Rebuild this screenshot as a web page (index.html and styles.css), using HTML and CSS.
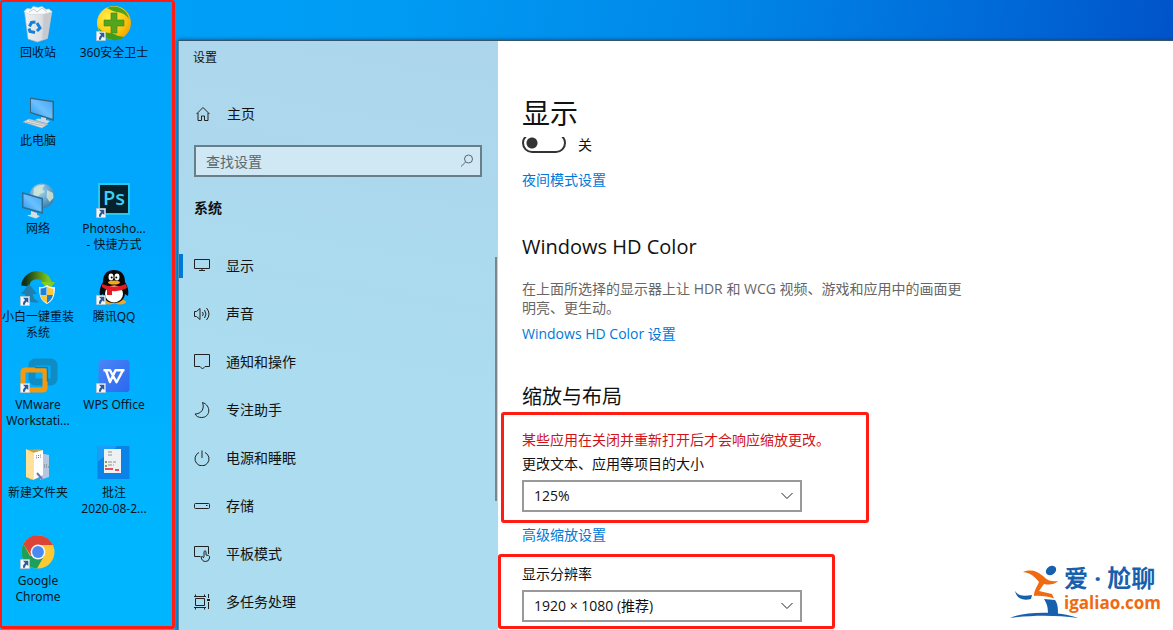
FILE: index.html
```html
<!DOCTYPE html>
<html lang="zh-CN">
<head>
<meta charset="utf-8">
<meta name="viewport" content="width=device-width, initial-scale=1">
<title>设置</title>
<link rel="stylesheet" href="styles.css">
</head>
<body>
<svg class="defs" aria-hidden="true">
  <defs>
    <linearGradient id="screen" x1="0" y1="1" x2="1" y2="0"><stop offset="0" stop-color="#2a95ec"/><stop offset=".5" stop-color="#6cc0ff"/><stop offset="1" stop-color="#42a5f2"/></linearGradient>
    <linearGradient id="bin" x1="0" x2="1"><stop offset="0" stop-color="#f1f3f5"/><stop offset=".6" stop-color="#dcdfe3"/><stop offset="1" stop-color="#a9adb3"/></linearGradient>
    <radialGradient id="ball" cx=".35" cy=".35" r=".75"><stop offset="0" stop-color="#fff04a"/><stop offset=".6" stop-color="#fdc913"/><stop offset="1" stop-color="#f0a000"/></radialGradient>
    <radialGradient id="globe" cx=".4" cy=".3" r=".8"><stop offset="0" stop-color="#a9d8f3"/><stop offset="1" stop-color="#2b76a8"/></radialGradient>
    <linearGradient id="arc" x1="0" x2="1"><stop offset="0" stop-color="#123018"/><stop offset="1" stop-color="#7ac51c"/></linearGradient>
    <linearGradient id="wps" x1="0" y1="0" x2="1" y2="1"><stop offset="0" stop-color="#4a86f5"/><stop offset="1" stop-color="#2b68f0"/></linearGradient>
    <symbol id="shortcut" viewBox="0 0 10 10"><path fill="#f4f6f8" stroke="#a9b4bf" stroke-width=".6" d="M.3.3h9.4v9.4H.3z"/><path fill="#2a5a9c" d="M3 1.8h5.3v5.1L6.700 5.400C5.500 6.300 5 7.300 5 8.700H3C2.800 6.600 3.600 5 5.100 3.900z"/></symbol>
  </defs>
</svg>
<div class="screen">
  <aside class="desktop">
    <ul class="icons">
      <li class="icon"><svg viewBox="0 2 40 40"><path fill="url(#bin)" stroke="#aeb4ba" stroke-width=".6" d="M6.500 8.500l27.500-.5-4.500 27.500-10 3.500-9.500-3z"/><path fill="#c6cace" d="M26 9l8-1-4.500 27.500-5 1.800z"/><path fill="#fafbfc" stroke="#cfd3d7" stroke-width=".6" d="M6 8.500l3-3 4 .5 2-2.500 5 1 4-1 4 3 3-.5 3 3-8 2-15 .5z"/><path d="M11 9l5-3 3 3 5-4 5 4" fill="none" stroke="#c3c8cc"/><g fill="none" stroke="#1780d6" stroke-width="3"><path d="M11.500 23.500l2-4 4-.5"/><path d="M19 20l3 5-3 3"/><path d="M17 29.500l-5-1-1-3"/></g></svg><span>回收站</span></li>
      <li class="icon"><svg viewBox="0 3 40 40"><path fill="#35667e" d="M12 7.500l24 3.500v20l-24-8z"/><path fill="url(#screen)" d="M13 9l21.500 3.300v16.500L13 22z"/><path fill="#cfd9df" d="M23 27l5 1v2l4 1-3 2.500-12-3.500 3-1.500 3 .5z"/><path fill="#e1e4e6" stroke="#9ba7ae" stroke-width=".6" d="M5 32l6-3 19 5-6 4z"/><path d="M8 32l18 4M11 30.500l17 4" stroke="#aeb5ba"/></svg><span>此电脑</span></li>
      <li class="icon"><svg viewBox="1 1 40 40"><circle cx="25" cy="16" r="12.500" fill="url(#globe)"/><path fill="#d7e9d6" opacity=".8" d="M17 8c3-3 8-4 11-3l-3 4 3 3-5 2-3 5-4-3zM30 10l6 3 .5 5-4 4-3-5z"/><path fill="#2c6f96" d="M5 12l21 6v16L5 28z"/><path fill="url(#screen)" d="M6.500 14l18 5.200v12.500l-18-5z"/><path fill="#d8dde0" d="M14 31l6 2v2l3 1-4 2.500-9-3 4-1z"/></svg><span>网络</span></li>
      <li class="icon"><svg viewBox="1 2 40 40"><path fill="none" stroke="url(#arc)" stroke-width="8" d="M8 19C10 5 29 5 31 17"/><path fill="#83cc24" d="M24 15h14l-6 8z"/><path fill="#1f7fae" d="M4 27l8-10 8 10h-4c0 5 3 6 6 8-8 2-14-2-14-8z"/><path fill="#f7fafc" d="M22 20c4 1 6-1 8-2 2 2 5 2 8 2 0 9-2 14-8 17-6-3-8-8-8-17z"/><path fill="#1a83d8" d="M23.500 21.500c3 0 4.500-1 6-2V28h-6zM30 28h6c-1 4-3 6-6 8z"/><path fill="#ffc83a" d="M30 19.500c2 1.500 4 2 6.500 2V28H30zM23.500 28H30v8c-4-2-6-4-6.500-8z"/><use href="#shortcut" x="3" y="29" width="10" height="10"/></svg><span>小白一键重装系统</span></li>
      <li class="icon"><svg viewBox="1 1 40 40"><rect x="15" y="6" width="22" height="20" rx="3" fill="none" stroke="#108cc5" stroke-width="7"/><rect x="6" y="14" width="22" height="20" rx="2" fill="none" stroke="#f49a10" stroke-width="5"/><path d="M18 11.500h12.500v14" fill="none" stroke="#147fa6" stroke-width="1.500"/><use href="#shortcut" x="3" y="27" width="10" height="10"/></svg><span>VMware Workstati...</span></li>
      <li class="icon"><svg viewBox="1 2 40 40"><path fill="#c99f45" d="M9 7l14-1 3 3v25l-12 3-5-3z"/><path fill="#b5c7df" d="M23 10l9 2v22l-9 3z"/><path fill="#fff" d="M16 10l10-3v25l-10 5z"/><path fill="#ffe29a" d="M9 6l8 4v27l-8-3z"/><path stroke="#6c747d" stroke-dasharray="1 1" d="M19 13l5-1M19 15l5-1M27 22h4M27 24h5"/><path stroke="#6e75bd" stroke-width="2" d="M20 30l5 6"/></svg><span>新建文件夹</span></li>
      <li class="icon"><svg viewBox="1 1 40 40"><circle cx="21" cy="20" r="16.500" fill="#fcc934"/><path fill="#db4437" d="M6.500 12A16.500 16.500 0 0 1 36 13H21l-7 11z"/><path fill="#1da05b" d="M6.500 12A16.500 16.500 0 0 0 20 36.500l7-12.500H13z"/><circle cx="21" cy="20" r="7.500" fill="#f3f6fa"/><circle cx="21" cy="20" r="5.900" fill="#4a88f4"/><use href="#shortcut" x="3" y="27" width="10" height="10"/></svg><span>Google Chrome</span></li>
      <li class="icon"><svg viewBox="1 2 40 40"><circle cx="21" cy="20" r="17" fill="url(#ball)"/><path fill="#4aa51d" d="M14 5C23 1 34 6 36 16c-5-8-12-6-16-8z"/><path fill="#3b9d1b" d="M5 24c5 8 13 4 20 9l6 1c-9 7-22 2-26-10z"/><path fill="#54a51d" stroke="#3b8618" stroke-width=".6" d="M18 10h6v7h7v6h-7v7h-6v-7h-7v-6h7z"/><use href="#shortcut" x="3" y="28" width="10" height="10"/></svg><span>360安全卫士</span></li>
      <li class="icon icon-ps"><svg viewBox="1 4 40 40"><rect x="5" y="6" width="32" height="32" fill="#26c9f2"/><rect x="7" y="8" width="28" height="28" fill="#06232d"/><text class="ps" x="10" y="28">Ps</text><use href="#shortcut" x="3" y="31" width="10" height="10"/></svg><span>Photosho...<br>- 快捷方式</span></li>
      <li class="icon"><svg viewBox="1 3 40 40"><ellipse cx="16" cy="36" rx="6" ry="2.500" fill="#f4a720"/><ellipse cx="27" cy="36" rx="6" ry="2.500" fill="#f4a720"/><path fill="#090909" d="M21 4c8 0 11 5 11 12 3 5 4 9 3 14l-3-2c-1 6-5 9-11 9s-10-3-11-9l-3 2c-1-5 0-9 3-14 0-7 3-12 11-12z"/><ellipse cx="21" cy="28" rx="9" ry="8.500" fill="#fff"/><ellipse cx="18" cy="11" rx="2.500" ry="3.400" fill="#fff"/><ellipse cx="24" cy="11" rx="2.500" ry="3.400" fill="#fff"/><circle cx="18.700" cy="11.500" r="1"/><circle cx="23.300" cy="11.500" r="1"/><ellipse cx="21" cy="16.500" rx="6" ry="2" fill="#f8a717"/><path fill="#e51b23" d="M9 18q12 5 24 0l1 4q-7 4-15 3v4h-5v-5l-5-3z"/><use href="#shortcut" x="3" y="29" width="10" height="10"/></svg><span>腾讯QQ</span></li>
      <li class="icon"><svg viewBox="1 1 40 40"><rect x="5.500" y="4" width="31" height="32" rx="3" fill="url(#wps)"/><path fill="none" stroke="#fff" stroke-width="2.400" stroke-linejoin="round" d="M10.500 14.200h6.500l6.500 12 6.500-12M13 14.500l4 11.500 5.500-11.800h9"/><use href="#shortcut" x="3" y="27" width="10" height="10"/></svg><span>WPS Office</span></li>
      <li class="icon"><svg viewBox="1 2 40 40"><rect x="4.500" y="3" width="32" height="33" fill="#0a83e8"/><path fill="#199df5" d="M4.500 3h20l-20 16z"/><rect x="11" y="6" width="17" height="24" fill="#edf1f3"/><path stroke="#8c9297" stroke-dasharray="4 1" d="M15 9h5M15 12h4M15 19h8M15 22h6"/><path fill="none" stroke="#e5505a" stroke-width="2" d="M12 26h8M22 27h4"/><path stroke="#88a33a" stroke-width="2" d="M12 19h2M12 23h2"/></svg><span>批注<br>2020-08-2...</span></li>
    </ul>
  </aside>

  <div class="window">
    <div class="sidebar">
      <div class="title">设置</div>
      <a class="item home" href="#home"><svg viewBox="0 0 16 16"><path d="M1.500 8L8 1.500 14.500 8M3 7v7.500h3.500V10h3v4.500H13V7"/></svg>主页</a>
      <div class="search">
        <input type="search" placeholder="查找设置" aria-label="查找设置">
        <svg viewBox="0 0 16 16"><circle cx="9.500" cy="6" r="4"/><path d="M6.600 9L2 13.500"/></svg>
      </div>
      <h2 class="group">系统</h2>
      <nav class="nav">
        <a class="item current" href="#display" aria-current="page"><svg viewBox="0 0 16 16"><path d="M.5 1.500h15v9H.5zM8 10.500v2M5 12.500h6"/></svg>显示</a>
        <a class="item" href="#sound"><svg viewBox="0 0 16 16"><path d="M.5 5.500h2l3.500-3v11l-3.500-3h-2zM8.500 6q1.500 2 0 4M10.500 4q3 4 0 8M12.500 2q5 6 0 12"/></svg>声音</a>
        <a class="item" href="#notify"><svg viewBox="0 0 16 16"><path d="M.5.500h15v12H11L8.500 15 6 12.500H.5z"/></svg>通知和操作</a>
        <a class="item" href="#focus"><svg viewBox="0 0 16 16"><path d="M8.500.5c9 3 8 15-1 15-3 0-5-1-6.500-3.500C7 12 11 7 8.500.5z"/></svg>专注助手</a>
        <a class="item" href="#power"><svg viewBox="0 0 16 16"><path d="M5 2.500a7 7 0 1 0 6 0M8 .5V8"/></svg>电源和睡眠</a>
        <a class="item" href="#storage"><svg viewBox="0 0 16 16"><rect x=".5" y="5.500" width="15" height="5" rx="1"/><path d="M12 7.500h1.500"/></svg>存储</a>
        <a class="item" href="#tablet"><svg viewBox="0 0 16 16"><path d="M6.500 10.500H.5v-10h14V8M10 11V5.500q1-1.500 2 0V9l2.500.5q1.500.5 1 2.500-.5 3.500-4 3.500Q8 15.500 7 11q1-1.500 3 1"/></svg>平板模式</a>
        <a class="item" href="#multitask"><svg viewBox="0 0 16 16"><path d="M1.500 4.500h9v7h-9zM0 2.500h12M0 13.500h12M1.500.5v2M10.500.5v2M1.500 13.500v2M10.500 13.500v2M14.500 0v4M14.500 8v7"/><path d="M13 6h3" stroke-width="2"/></svg>多任务处理</a>
      </nav>
    </div>

    <main class="content">
      <h1>显示</h1>
      <label class="toggle"><span class="track"><input type="checkbox" role="switch"></span><span>关</span></label>
      <a class="link night" href="#night">夜间模式设置</a>
      <h2>Windows HD Color</h2>
      <p class="note">在上面所选择的显示器上让 HDR 和 WCG 视频、游戏和应用中的画面更明亮、更生动。</p>
      <a class="link" href="#hdcolor">Windows HD Color 设置</a>
      <h2 class="scale-title">缩放与布局</h2>
      <section class="marked scale">
        <p class="warning">某些应用在关闭并重新打开后才会响应缩放更改。</p>
        <label for="scale">更改文本、应用等项目的大小</label>
        <div class="picker"><select id="scale"><option>125%</option></select><svg viewBox="0 0 12 8"><path d="M.5 1L6 6.500 11.500 1"/></svg></div>
      </section>
      <a class="link advanced" href="#advanced">高级缩放设置</a>
      <section class="marked resolution">
        <label for="resolution">显示分辨率</label>
        <div class="picker"><select id="resolution"><option>1920 × 1080 (推荐)</option></select><svg viewBox="0 0 12 8"><path d="M.5 1L6 6.500 11.500 1"/></svg></div>
      </section>
    </main>
  </div>
</div>
<div class="watermark">
  <svg viewBox="0 0 70 54"><ellipse cx="41" cy="5.500" rx="5.500" ry="4.300" transform="rotate(-35 41 5.500)" fill="#1660ad"/><path fill="#ef6a10" d="M13 7c8-3 14-1 20 4 5 5 9 6 15 5-4 4-9 4-14 3l-5 7 13 3 2 4.500c-6-2-13-3-20-2.500 0-6 3-9 5-14-4-5-8-9-16-10z"/><path fill="#1660ad" d="M5 26c4 6 10 5 17 4l-1 4c-8 2-14 0-16-8zM34 34l11 1c3 4 3 9 3 14H38c0-7-1-10-4-15z"/><path fill="#1660ad" d="M0 53c15-7 50-7 68 0-22-3-46-3-68 0z"/></svg>
  <div class="brand"><span class="brand-name">爱 · 尬聊</span><span class="brand-url">igaliao.com</span></div>
</div>
</body>
</html>
```
FILE: styles.css
```css
* { box-sizing: border-box; }

:root {
  --mark: #ff1c12;
  --link: #0078d7;
}

body {
  margin: 0;
  font: 14px/20px "Open Sans", "Noto Sans CJK SC", sans-serif;
  color: #111;
}

h1, h2, p, ul { margin: 0; padding: 0; font-weight: 400; }
a { text-decoration: none; color: inherit; }
.defs { position: absolute; width: 0; height: 0; }

.screen {
  display: grid;
  grid-template-columns: 175px 1fr;
  min-height: 100vh;
  background: linear-gradient(100deg, #00a2fb 0%, #009cf4 30%, #0088e8 55%, #006ad8 78%, #0046c0 100%);
}

/* Desktop */
.desktop {
  position: relative;
  background: linear-gradient(#00a2fb, #00a9fd 40%, #00b5ff 80%);
  color: #02141f;
}
.desktop::after {
  content: "";
  position: absolute;
  inset: 0 0 1px;
  border: 3px solid var(--mark);
  border-width: 2px 3px 3px 2px;
  border-radius: 3px;
  pointer-events: none;
}
.icons {
  display: grid;
  grid-template: repeat(7, 88px) / repeat(2, 76px);
  grid-auto-flow: column;
  list-style: none;
}
.icon {
  display: flex;
  flex-direction: column;
  align-items: center;
  padding-top: 5px;
  font-family: "Noto Sans", "Noto Sans CJK SC", sans-serif;
  font-size: 12px;
  line-height: 16px;
  text-align: center;
}
.icon svg { width: 40px; height: 40px; flex: none; }
.icon-ps { grid-row: 3; }
.ps { font: 600 20px "Open Sans", sans-serif; fill: #3bd0f5; }

/* Settings window */
.window {
  display: grid;
  grid-template-columns: 320px 1fr;
  margin: 40px 0 0 3px;
  border-top: 1px solid #35546c;
  background: #fff;
  box-shadow: 0 0 4px #00487c;
}
.sidebar {
  background: linear-gradient(190deg, #add6ec, #acd8ed 25%, #abdcef 55%, #abdcef);
  border-left: 1px solid #5a8ca6;
}
.title { padding-left: 14px; font-size: 12px; line-height: 34px; }
.item {
  display: flex;
  align-items: center;
  gap: 16px;
  height: 48px;
  padding-left: 15px;
}
.item svg { width: 16px; height: 16px; }
.sidebar svg, .picker svg { fill: none; stroke: #222; stroke-width: 1; }
.home { margin-top: 15px; padding-left: 16px; }
.search { position: relative; margin: 7px 16px 15px 15px; }
.search input {
  display: block;
  width: 100%;
  height: 32px;
  padding: 0 32px 0 10px;
  border: 2px solid #687f8b;
  border-radius: 0;
  background: #d0e8f4;
  font: inherit;
  appearance: none;
}
.search input::placeholder { color: #586770; opacity: 1; }
.search svg { position: absolute; right: 7px; top: 8px; width: 16px; height: 16px; stroke: #586770; }
.group { padding-left: 15px; font-size: 14px; line-height: 32px; font-weight: 700; }
.nav { position: relative; margin-top: 18px; }
.nav::after {
  content: "";
  position: absolute;
  top: 15px;
  right: 1px;
  width: 2px;
  height: 244px;
  background: #7c8588;
}
.current { position: relative; }
.current::before {
  content: "";
  position: absolute;
  left: 0;
  top: 12px;
  width: 4px;
  height: 24px;
  background: var(--link);
}

/* Display page */
.content { padding: 54px 24px 0; }
h1 { font-size: 28px; line-height: 36px; }
.content h2 { font-size: 20px; line-height: 28px; }
.toggle {
  display: flex;
  align-items: center;
  gap: 12px;
  height: 16px;
  margin-top: 6px;
}
.track {
  display: flex;
  align-items: flex-end;
  height: 16px;
  overflow: hidden;
}
.track input {
  flex: none;
  width: 44px;
  height: 20px;
  margin: 0;
  border: 2px solid #333;
  border-radius: 10px;
  background: radial-gradient(circle at 8px 8px, #333 5px, transparent 6px);
  appearance: none;
}
.link { display: block; width: fit-content; color: var(--link); }
.night { margin: 17px 0 43px; }
.note { max-width: 444px; margin: 18px 0 7px; line-height: 19px; color: #666; }
.content .scale-title { margin-top: 39px; }
.marked { border: 3px solid var(--mark); border-radius: 3px; }
.marked label { display: block; margin-bottom: 6px; }
.scale { max-width: 368px; margin: 1px 0 2px -21px; padding: 15px 18px 8px; }
.resolution { max-width: 337px; margin: 9px 0 0 -24px; padding: 7px 21px 4px; }
.warning { margin-bottom: 4px; color: #d01317; }
.picker { position: relative; max-width: 280px; }
.picker select {
  display: block;
  width: 100%;
  height: 32px;
  padding: 0 32px 0 10px;
  border: 2px solid #999;
  border-radius: 0;
  background: #fff;
  color: #111;
  font: inherit;
  appearance: none;
}
.picker svg { position: absolute; right: 9px; top: 12px; width: 12px; height: 8px; pointer-events: none; }

/* Site watermark */
.watermark {
  position: absolute;
  right: 12px;
  bottom: 11px;
  display: flex;
  align-items: flex-start;
}
.watermark svg { width: 70px; height: 54px; margin-right: -16px; }
.brand { display: flex; flex-direction: column; font-weight: 700; white-space: nowrap; }
.brand-name { font-size: 24px; line-height: 26px; color: #1660ad; }
.brand-url { font-size: 17px; line-height: 24px; color: #ef6a10; }
```
